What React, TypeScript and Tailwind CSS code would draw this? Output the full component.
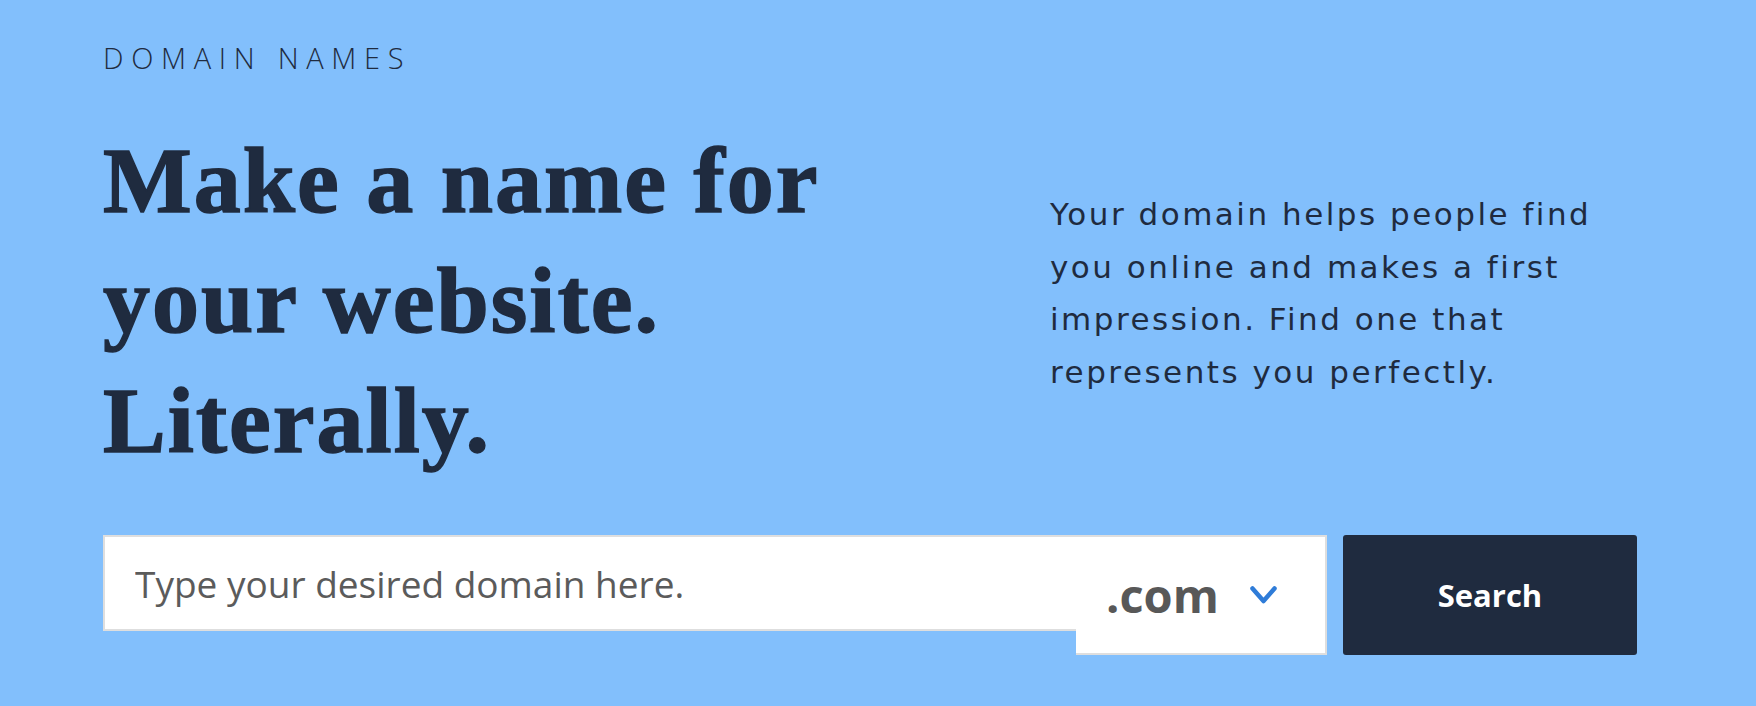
export default function App() {
  return (
    <div className="min-h-screen bg-[#82bffc] pl-[103px] pt-[43px] text-[#1f2b3f]">
      <p className="font-['Open_Sans',sans-serif] text-[29px] font-light leading-none tracking-[0.265em]">
        DOMAIN NAMES
      </p>

      <div className="mt-[48px] flex items-start">
        <h1 className="w-[947px] shrink-0 font-['Liberation_Serif',serif] text-[94px] font-bold leading-[120px] tracking-[2px] [-webkit-text-stroke:1.5px_#1f2b3f]">
          Make a name for
          <br />
          your website.
          <br />
          Literally.
        </h1>
        <p className="mt-[68px] font-['DejaVu_Sans',sans-serif] text-[31px] font-normal leading-[52.5px] tracking-[2.5px]">
          Your domain helps people find
          <br />
          you online and makes a first
          <br />
          impression. Find one that
          <br />
          represents you perfectly.
        </p>
      </div>

      <div className="mt-[55px] flex items-start">
        <div className="relative h-[96px] w-[1224px] border-2 border-[#dedede] bg-white">
          <input
            type="text"
            placeholder="Type your desired domain here."
            className="h-full w-full bg-transparent pl-[30px] font-['Open_Sans',sans-serif] text-[37px] text-[#5b5b5b] outline-none placeholder:text-[#5b5b5b]"
          />
          <div className="absolute right-[-2px] top-[-2px] flex h-[120px] w-[251px] items-center border-2 border-l-0 border-[#dedede] bg-white pl-[30px]">
            <span className="font-['Open_Sans',sans-serif] text-[47px] font-bold leading-none text-[#585858]">
              .com
            </span>
            <svg width="27" height="18" viewBox="0 0 27 18" className="ml-[31px]" fill="none">
              <polyline
                points="2.5,2.5 13.5,15 24.5,2.5"
                stroke="#2f7cd8"
                strokeWidth="4.5"
                strokeLinecap="round"
                strokeLinejoin="round"
              />
            </svg>
          </div>
        </div>
        <button className="ml-[16px] flex h-[120px] w-[294px] items-center justify-center rounded-[3px] bg-[#1f2b3f] font-['Open_Sans',sans-serif] text-[31px] font-bold text-white">
          Search
        </button>
      </div>
    </div>
  );
}
